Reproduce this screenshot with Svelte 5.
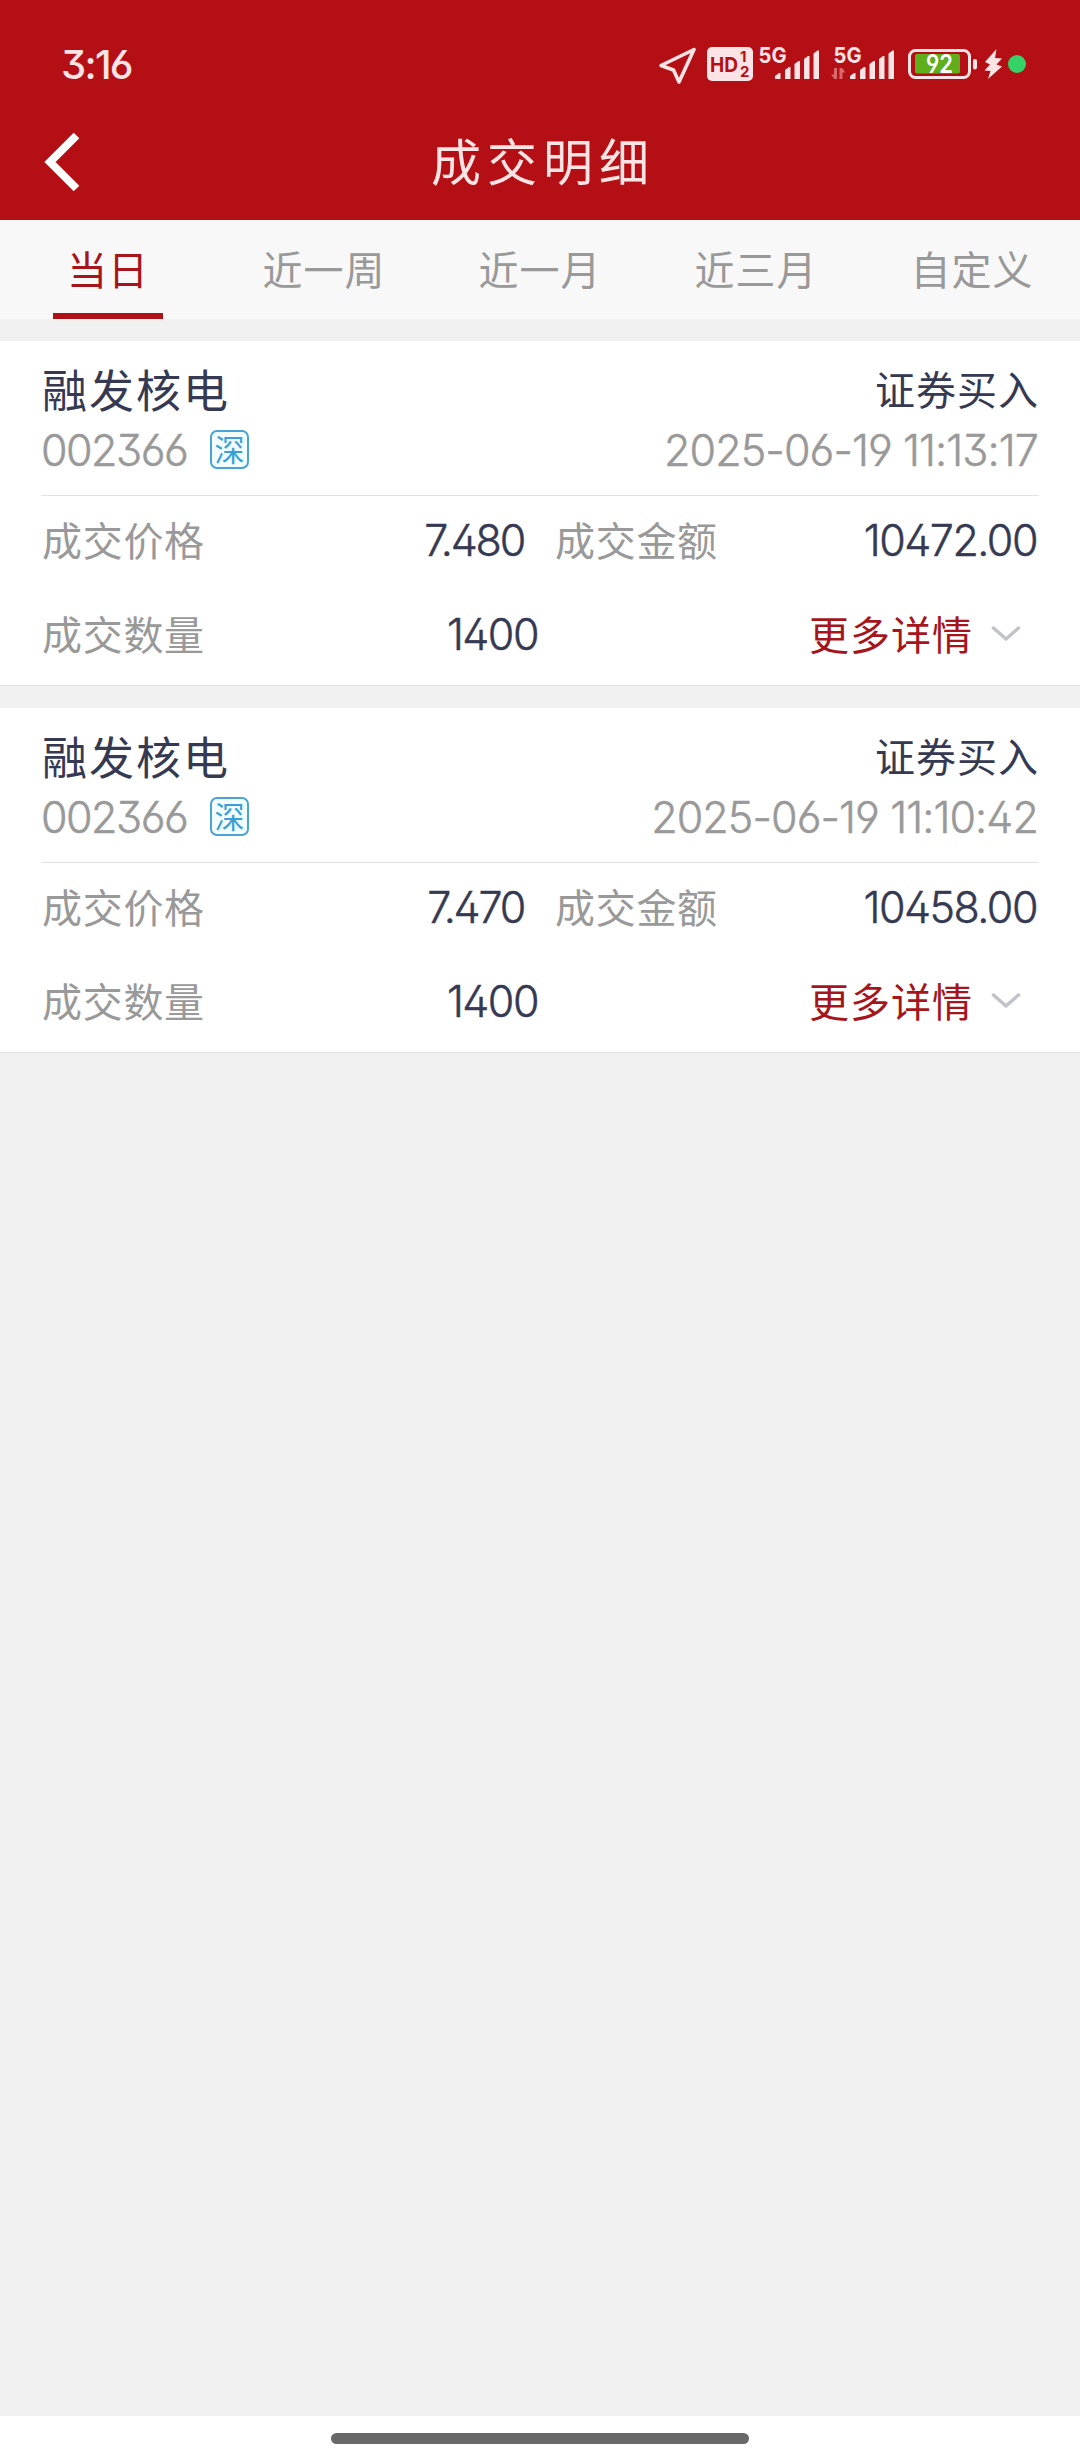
<script>
	const tabs = ['当日', '近一周', '近一月', '近三月', '自定义'];
	const signalOffsets = [0, 75];
	const signalBars = [
		{ x: 775, y: 73 },
		{ x: 785, y: 67 },
		{ x: 794.5, y: 61 },
		{ x: 804, y: 56 },
		{ x: 813.5, y: 50.5 }
	];

	const trades = [
		{
			name: '融发核电',
			code: '002366',
			market: '深',
			side: '证券买入',
			time: '2025-06-19 11:13:17',
			price: '7.480',
			amount: '10472.00',
			quantity: '1400'
		},
		{
			name: '融发核电',
			code: '002366',
			market: '深',
			side: '证券买入',
			time: '2025-06-19 11:10:42',
			price: '7.470',
			amount: '10458.00',
			quantity: '1400'
		}
	];

	let activeTab = $state(0);
</script>

<div class="screen">
	<header class="header">
		<div class="status">
			<span class="status__time">3:16</span>
			<svg class="status__icons" viewBox="650 40 384 48" width="384" height="48">
				<path class="line" d="M694 49.5 661 65.5 673.5 70 679 82Z" stroke-width="3.6" />

				<rect class="ink" x="707" y="47" width="46" height="34" rx="5" />
				<text class="hd" x="710" y="71.5" font-size="20.5" textLength="28" lengthAdjust="spacingAndGlyphs">HD</text>
				<text class="hd" x="740" y="62" font-size="15">1</text>
				<text class="hd" x="740" y="77" font-size="15" textLength="9.5" lengthAdjust="spacingAndGlyphs">2</text>

				{#each signalOffsets as offset, index}
					<g transform="translate({offset} 0)">
						<text class="net" x="758.5" y="62.5" textLength="28" lengthAdjust="spacingAndGlyphs">5G</text>
						{#each signalBars as bar}
							<path
								class="ink"
								d="M{bar.x} 79V{bar.y + 3}L{bar.x + 4} {bar.y}H{bar.x + 5.5}V79Z"
							/>
						{/each}
						{#if index === 1}
							<path
								class="faint"
								d="M762 68v11h-2.8l-3-4.5h2.8V68ZM764.5 79V68h2.8l3 4.5h-2.8V79Z"
							/>
						{/if}
					</g>
				{/each}

				<rect class="line" x="909.5" y="50.5" width="60" height="27" rx="6" stroke-width="3" />
				<rect x="915" y="54" width="45" height="19.5" rx="2" fill="#5fae1b" />
				<rect class="ink" x="973" y="59" width="4" height="10.5" rx="2" />
				<text class="level" x="926" y="73" textLength="27" lengthAdjust="spacingAndGlyphs">92</text>
				<path class="ink" d="M996.5 49 985 62l5 2.500-5.500 6 6 .5-2.500 8L1002 66.500l-5.500-2 5.500-6-7-.5Z" />
				<circle cx="1017" cy="64" r="9" fill="#35d268" />
			</svg>
		</div>

		<div class="titlebar">
			<svg class="titlebar__back" viewBox="0 0 36 60" width="36" height="60">
				<path d="M32.5 3.5 6 30 32.5 56.5" fill="none" stroke="#fff" stroke-width="8" />
			</svg>
			<h1>成交明细</h1>
		</div>
	</header>

	<nav class="tabs">
		{#each tabs as tab, index}
			<button class="tab" class:is-active={activeTab === index} onclick={() => (activeTab = index)}>
				<span>{tab}</span>
			</button>
		{/each}
	</nav>

	<main class="list">
		{#each trades as trade}
			<article class="card">
				<div class="card__head">
					<div class="line-top">
						<strong class="name">{trade.name}</strong>
						<span class="side">{trade.side}</span>
					</div>
					<div class="line-sub">
						<div class="code">
							<span class="num code__num">{trade.code}</span>
							<span class="market">{trade.market}</span>
						</div>
						<time class="num time">{trade.time}</time>
					</div>
				</div>

				<div class="row row--price">
					<span class="label">成交价格</span>
					<span class="num price">{trade.price}</span>
					<span class="label">成交金额</span>
					<span class="num amount">{trade.amount}</span>
				</div>
				<div class="row row--quantity">
					<span class="label">成交数量</span>
					<span class="num quantity">{trade.quantity}</span>
					<button class="more">
						<span>更多详情</span>
						<svg viewBox="0 0 30 18" width="30" height="18">
							<path d="M2.5 3 15 14 27.5 3" />
						</svg>
					</button>
				</div>
			</article>
		{/each}
	</main>

	<footer class="home"><span class="home__bar"></span></footer>
</div>

<style>
	:global(body) {
		background: #f1f1f1;
	}

	.screen {
		width: 1080px;
		height: 2460px;
		display: flex;
		flex-direction: column;
		background: #f1f1f1;
		font-family: 'Noto Sans CJK SC', sans-serif;
		font-size: 40px;
		color: #353a52;
	}

	button {
		padding: 0;
		border: 0;
		background: none;
		font: inherit;
		cursor: pointer;
	}

	.num {
		font-family: Inter, sans-serif;
		font-size: 43px;
		font-weight: 350;
		font-feature-settings: 'ss01', 'cv09';
		letter-spacing: -1.5px;
		white-space: nowrap;
		-webkit-text-stroke: 0.5px currentColor;
	}

	.header {
		height: 220px;
		flex-shrink: 0;
		background: #b40f14;
		color: #fce4e4;
	}

	.status {
		height: 88px;
		padding: 40px 46px 0 61px;
		display: flex;
		justify-content: space-between;
		box-sizing: border-box;
	}

	.status__time {
		font-family: Inter, sans-serif;
		font-size: 40px;
		font-weight: 500;
		font-feature-settings: 'ss01', 'cv09';
		line-height: 49px;
		letter-spacing: -1.7px;
	}

	.ink {
		fill: #fce4e6;
	}

	.faint {
		fill: #d9686c;
	}

	.line {
		fill: none;
		stroke: #fce4e6;
		stroke-linejoin: round;
	}

	.status__icons text {
		font-family: Inter, sans-serif;
		font-weight: 700;
	}

	.status__icons .hd {
		fill: #b40f14;
	}

	.status__icons .net {
		fill: #fce4e6;
		font-size: 22px;
	}

	.status__icons .level {
		fill: #fff;
		font-size: 25px;
		font-weight: 600;
		font-feature-settings: 'ss01';
	}

	.titlebar {
		height: 132px;
		padding: 0 44px;
		display: grid;
		grid-template-columns: 36px 1fr 36px;
		align-items: start;
	}

	.titlebar__back {
		margin-top: 44px;
	}

	h1 {
		margin: 0;
		padding-left: 6px;
		font-size: 50px;
		font-weight: 400;
		line-height: 60px;
		padding-top: 41px;
		letter-spacing: 6px;
		text-align: center;
	}

	.tabs {
		height: 99px;
		flex-shrink: 0;
		display: grid;
		grid-template-columns: repeat(5, 1fr);
		background: #f8f8f8;
	}

	.tab {
		display: flex;
		justify-content: center;
		line-height: 96px;
		letter-spacing: 1px;
		color: #999;
	}

	.tab span {
		width: 110px;
		display: flex;
		justify-content: center;
		white-space: nowrap;
		box-sizing: border-box;
		height: 99px;
	}

	.tab.is-active {
		color: #a5151b;
	}

	.tab.is-active span {
		border-bottom: 6px solid #ae1218;
	}

	.list {
		flex: 1;
		padding-top: 22px;
		display: flex;
		flex-direction: column;
		gap: 22px;
	}

	.card {
		height: 345px;
		padding: 0 41px;
		box-sizing: border-box;
		background: #fff;
		border-bottom: 1px solid #e2e2e2;
	}

	.card__head {
		height: 155px;
		padding-top: 18px;
		box-sizing: border-box;
		border-bottom: 1px solid #e2e2e2;
	}

	.line-top,
	.line-sub {
		height: 60px;
		display: flex;
		align-items: center;
		justify-content: space-between;
		line-height: 60px;
	}

	.line-sub {
		height: 61px;
		color: #999;
	}

	.name {
		padding-left: 1px;
		font-size: 45px;
		font-weight: 400;
		letter-spacing: 2px;
	}

	.side {
		padding-bottom: 3px;
		letter-spacing: 1px;
	}

	.code {
		display: flex;
		align-items: center;
	}

	.code__num {
		width: 169px;
	}

	.time {
		padding-right: 1px;
		letter-spacing: -0.9px;
	}

	.market {
		width: 39px;
		height: 39px;
		box-sizing: border-box;
		border: 2px solid #4aa3d4;
		border-radius: 7px;
		background: #f2fdff;
		color: #3a9fd8;
		font-size: 30px;
		line-height: 33px;
		text-align: center;
	}

	.row {
		height: 88px;
		display: grid;
		grid-template-columns: 165px 318px 1fr auto;
		align-items: center;
		line-height: 60px;
	}

	.row--quantity {
		height: 100px;
		grid-template-columns: 165px 332px 1fr;
	}

	.label {
		padding: 0 0 3px 1px;
		letter-spacing: 0.7px;
		color: #999;
	}

	.row--price .label:nth-child(3) {
		padding-left: 31px;
	}

	.price,
	.quantity {
		text-align: right;
	}

	.price {
		letter-spacing: -2.2px;
	}

	.amount {
		padding-right: 2px;
	}

	.more {
		justify-self: end;
		display: flex;
		align-items: center;
		gap: 18px;
		padding-right: 18px;
		letter-spacing: 1px;
		color: #a5151b;
	}

	.more span {
		padding-bottom: 3px;
	}

	.more path {
		fill: none;
		stroke: #c1c3c9;
		stroke-width: 3.5;
		stroke-linecap: round;
		stroke-linejoin: round;
	}

	.home {
		height: 44px;
		flex-shrink: 0;
		display: flex;
		justify-content: center;
		background: #fff;
	}

	.home__bar {
		width: 418px;
		height: 11px;
		margin-top: 17px;
		border-radius: 6px;
		background: #696969;
	}
</style>
